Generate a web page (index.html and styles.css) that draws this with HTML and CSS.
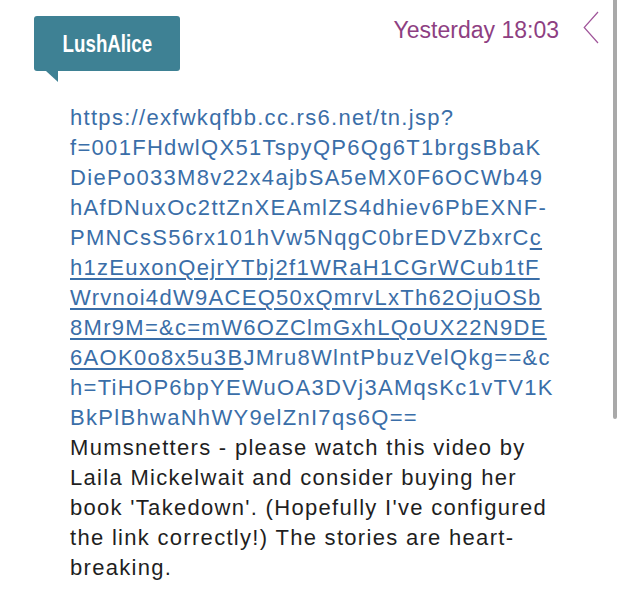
FILE: index.html
```html
<!DOCTYPE html>
<html lang="en">
<head>
<meta charset="utf-8">
<title>LushAlice</title>
<link rel="stylesheet" href="styles.css">
</head>
<body>
<div class="page">
  <header class="top">
    <div class="badge"><span class="badge-name">LushAlice</span></div>
    <div class="meta">
      <span class="time">Yesterday 18:03</span>
      <svg class="chev" width="16" height="33" viewBox="0 0 16 33" aria-hidden="true">
        <path d="M15 1 L1.2 16.5 L15 32" fill="none" stroke="#a0559a" stroke-width="1.2"/>
      </svg>
    </div>
  </header>
  <div class="post">
    <span class="url">https://exfwkqfbb.cc.rs6.net/tn.jsp?<br>f=001FHdwlQX51TspyQP6Qg6T1brgsBbaK<br>DiePo033M8v22x4ajbSA5eMX0F6OCWb49<br>hAfDNuxOc2ttZnXEAmlZS4dhiev6PbEXNF-<br>PMNCsS56rx101hVw5NqgC0brEDVZbxrC<a class="link" href="#">c<br>h1zEuxonQejrYTbj2f1WRaH1CGrWCub1tF<br>Wrvnoi4dW9ACEQ50xQmrvLxTh62OjuOSb<br>8Mr9M=&amp;c=mW6OZClmGxhLQoUX22N9DE<br>6AOK0o8x5u3B</a>JMru8WlntPbuzVelQkg==&amp;c<br>h=TiHOP6bpYEWuOA3DVj3AMqsKc1vTV1K<br>BkPlBhwaNhWY9elZnI7qs6Q==</span><br>Mumsnetters - please watch this video by<br>Laila Mickelwait and consider buying her<br>book 'Takedown'. (Hopefully I've configured<br>the link correctly!) The stories are heart-<br>breaking.
  </div>
  <div class="scrollbar"></div>
</div>
</body>
</html>
```
FILE: styles.css
```css
html, body {
  margin: 0;
  padding: 0;
  background: #ffffff;
}

.page {
  position: relative;
  width: 623px;
  height: 600px;
  overflow: hidden;
  font-family: "Liberation Sans", Arial, sans-serif;
}

.top {
  display: flex;
  justify-content: space-between;
  align-items: flex-start;
  padding: 0 24px 0 34px;
}

.badge {
  position: relative;
  margin-top: 16px;
  width: 146px;
  height: 55px;
  background: #3e8194;
  border-radius: 3px;
  display: flex;
  align-items: center;
  justify-content: center;
}

.badge::after {
  content: "";
  position: absolute;
  left: 12px;
  top: 55px;
  width: 12px;
  height: 11px;
  background: #3e8194;
  clip-path: polygon(0 0, 100% 0, 100% 100%);
}

.badge-name {
  display: inline-block;
  font-family: "Liberation Sans", Arial, sans-serif;
  font-weight: bold;
  font-size: 24px;
  line-height: 55px;
  color: #ffffff;
  transform: scaleX(0.78);
}

.meta {
  display: flex;
  align-items: flex-start;
  gap: 24px;
}

.time {
  margin-top: 19px;
  font-size: 23px;
  line-height: 23px;
  color: #8e3f82;
}

.chev {
  display: block;
  margin-top: 11px;
}

.post {
  padding: 32px 40px 0 70px;
  font-size: 22px;
  line-height: 30px;
  letter-spacing: 1.3px;
  color: #1f1f1f;
  white-space: nowrap;
}

.url {
  color: #3a6ea8;
}

.link {
  color: #3a6ea8;
  text-decoration: underline;
  text-decoration-thickness: 1.5px;
  text-underline-offset: 3px;
}

.scrollbar {
  position: absolute;
  top: 0;
  left: 613px;
  width: 4px;
  height: 419px;
  background: #a9a9a9;
  border-radius: 0 0 2px 2px;
}
```
